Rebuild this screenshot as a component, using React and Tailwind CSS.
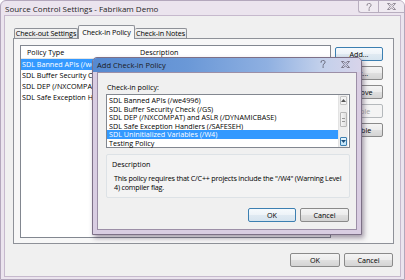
import React from "react";

function Btn({ children, className = "", def = false, disabled = false }) {
  const base =
    "h-[14px] flex items-center justify-center rounded-[2px] border whitespace-nowrap overflow-hidden";
  const look = def
    ? "border-[#3c7fb1] bg-[linear-gradient(#f6fafd,#edf3f8_50%,#e0eaf2_50%,#d6e4ef)] text-black"
    : disabled
    ? "border-[#b5b9bc] bg-[#f4f4f4] text-[#a3a3a3]"
    : "border-[#8a8a8a] bg-[linear-gradient(#f4f4f4,#ececec_50%,#e0e0e0_50%,#d4d4d4)] text-black";
  return <div className={`${base} ${look} ${className}`}>{children}</div>;
}

function CloseGlyph({ color = "#7b7480" }) {
  return (
    <svg width="9" height="7" viewBox="0 0 9 7">
      <path
        d="M0.5 0.5h2.3l1.7 1.8 1.7-1.8h2.3l-2.8 3 2.8 3h-2.3l-1.7-1.8-1.7 1.8h-2.3l2.8-3z"
        fill="none"
        stroke={color}
        strokeWidth="0.8"
      />
    </svg>
  );
}

function HelpGlyph({ color = "#7b7480" }) {
  return (
    <svg width="6" height="8" viewBox="0 0 6 8">
      <path
        d="M1 2.3a2 2 0 1 1 3 1.6c-0.6 0.4-0.9 0.7-0.9 1.4M3.1 6.6v0.9"
        fill="none"
        stroke={color}
        strokeWidth="0.9"
        strokeLinecap="round"
      />
    </svg>
  );
}

export default function App() {
  const outerRows = [
    "SDL Banned APIs (/we4996)",
    "SDL Buffer Security Check (/GS)",
    "SDL DEP (/NXCOMPAT) and ASLR (/DYNAMICBASE)",
    "SDL Safe Exception Handlers (/SAFESEH)",
  ];
  const innerRows = [
    "SDL Banned APIs (/we4996)",
    "SDL Buffer Security Check (/GS)",
    "SDL DEP (/NXCOMPAT) and ASLR (/DYNAMICBASE)",
    "SDL Safe Exception Handlers (/SAFESEH)",
    "SDL Uninitialized Variables (/W4)",
    "Testing Policy",
  ];
  return (
    <div className="w-[405px] h-[280px] relative overflow-hidden bg-[#ebe4ee] border border-[#b3a7bc] rounded-t-[6px] flex flex-col font-['Open_Sans',sans-serif] text-[7.2px] leading-[9px] text-black">
      {/* outer title bar */}
      <div className="h-[14px] flex items-start shrink-0">
        <span className="pl-[4px] pt-[3px] text-[8px] text-[#1e1e1e] whitespace-nowrap">
          Source Control Settings - Fabrikam Demo
        </span>
        <div className="ml-auto flex h-[12px] border-l border-b border-[#b8aebf] rounded-bl-[3px] bg-[#efeaf1]">
          <div className="w-[20px] flex items-center justify-center border-r border-[#b8aebf]">
            <HelpGlyph />
          </div>
          <div className="w-[25px] flex items-center justify-center">
            <CloseGlyph />
          </div>
        </div>
      </div>

      {/* outer client */}
      <div className="mx-[3px] mb-[2px] flex-1 border border-[#c6b9cd] bg-[#f0f0f0] flex flex-col pl-[8px] pr-[6px]">
        {/* tabs */}
        <div className="h-[22px] flex items-end shrink-0 pl-[1px] tracking-[-0.1px]">
          <div className="w-[64px] h-[10px] border border-b-0 border-[#8e9198] rounded-t-[2px] bg-[linear-gradient(#f4f4f4,#e4e4e4)] flex items-center justify-center whitespace-nowrap">
            Check-out Settings
          </div>
          <div className="w-[57px] h-[14px] -mb-px z-10 border border-b-0 border-[#8e9198] rounded-t-[2px] bg-[#f7f7f7] flex items-center justify-center whitespace-nowrap">
            Check-in Policy
          </div>
          <div className="w-[52px] h-[10px] border border-b-0 border-l-0 border-[#8e9198] rounded-t-[2px] bg-[linear-gradient(#f4f4f4,#e4e4e4)] flex items-center justify-center whitespace-nowrap">
            Check-in Notes
          </div>
        </div>

        {/* tab panel */}
        <div className="h-[206px] shrink-0 border border-[#8e9198] bg-[#f7f7f7] flex pl-[6px] pt-[6px] pr-[9px]">
          <div className="w-[311px] h-[193px] border border-[#828790] bg-white flex flex-col">
            <div className="h-[13px] flex items-center border-b border-[#e5e5e5] shrink-0">
              <span className="w-[113px] pl-[6px]">Policy Type</span>
              <span className="pl-[6px]">Description</span>
            </div>
            {outerRows.map((r, i) => (
              <div key={r} className="h-[11px] flex items-center">
                <span
                  className={
                    i === 0
                      ? "h-[11px] w-[113px] flex items-center pl-[1px] bg-[#3399ff] text-white whitespace-nowrap"
                      : "h-[11px] w-[113px] flex items-center pl-[1px] whitespace-nowrap"
                  }
                >
                  {r}
                </span>
              </div>
            ))}
          </div>
          <div className="ml-[4px] flex flex-col gap-[5px] pt-[2px]">
            <Btn def className="w-[48px]">Add...</Btn>
            <Btn className="w-[48px]">Edit...</Btn>
            <Btn className="w-[48px]">Remove</Btn>
            <Btn disabled className="w-[48px]">Enable</Btn>
            <Btn className="w-[48px]">Disable</Btn>
          </div>
        </div>

        {/* bottom buttons */}
        <div className="mt-[9px] flex justify-end gap-[4px] pr-[1px]">
          <Btn className="w-[50px]">OK</Btn>
          <Btn className="w-[49px]">Cancel</Btn>
        </div>
      </div>

      {/* Add Check-in Policy dialog (window over content) */}
      <div className="absolute left-[91px] top-[56px] w-[270px] h-[178px] rounded-t-[5px] border border-[#7d7087] bg-[#d9cde2] shadow-[2px_3px_5px_rgba(60,40,70,0.45)] flex flex-col">
        <div className="h-[14px] shrink-0 rounded-t-[4px] bg-[linear-gradient(90deg,#5689d0,#6a98d7_35%,#8fb0e1_65%,#c2d0eb_85%,#d8d4ea)] flex items-center">
          <span className="pl-[4px] text-[7.6px] text-[#1a1a1a]">Add Check-in Policy</span>
          <div className="ml-auto flex h-[12px] self-start pr-[4px]">
            <div className="w-[20px] flex items-center justify-center">
              <HelpGlyph color="#5a5a6a" />
            </div>
            <div className="w-[24px] flex items-center justify-center">
              <CloseGlyph color="#6a6474" />
            </div>
          </div>
        </div>
        <div className="mx-[4px] mb-[4px] flex-1 border border-[#9c8fa7] bg-[#f0f0f0] flex flex-col pl-[8px] pt-[10px]">
          <div className="h-[9px] pl-[1px]">Check-in policy:</div>
          <div className="mt-[2px] w-[244px] h-[54px] border border-[#828790] bg-white flex">
            <div className="flex-1 flex flex-col pt-[1px]">
              {innerRows.map((r, i) => (
                <div
                  key={r}
                  className={
                    i === 4
                      ? "h-[8.5px] leading-[8.5px] pl-[2px] bg-[#3399ff] text-white whitespace-nowrap"
                      : "h-[8.5px] leading-[8.5px] pl-[2px] whitespace-nowrap"
                  }
                >
                  {r}
                </div>
              ))}
            </div>
            <div className="w-[10px] mr-[1px] flex flex-col bg-[#eeeeee] border-l border-[#e3e3e3]">
              <div className="h-[9px] m-[1px] rounded-[1px] border border-[#c5c5c5] bg-[#f3f3f3] flex items-center justify-center">
                <svg width="5" height="3" viewBox="0 0 5 3">
                  <path d="M0 3L2.5 0L5 3z" fill="#555" />
                </svg>
              </div>
              <div className="h-[6px]" />
              <div className="h-[15px] mx-[1px] rounded-[1px] border border-[#b8b8b8] bg-[linear-gradient(90deg,#f5f5f5,#e0e0e0)] flex items-center justify-center">
                <div className="w-[3px] h-[4px] border-y border-[#999]" />
              </div>
              <div className="flex-1" />
              <div className="h-[9px] m-[1px] rounded-[1px] border border-[#3c7fb1] bg-[linear-gradient(#e4f3fc,#bfe3f9)] flex items-center justify-center">
                <svg width="5" height="3" viewBox="0 0 5 3">
                  <path d="M0 0L2.5 3L5 0z" fill="#1c4f7c" />
                </svg>
              </div>
            </div>
          </div>
          <div className="mt-[6px] w-[244px] h-[44px] border border-[#dde2e6] rounded-[2px] bg-[#f3f3f3] flex flex-col pt-[5px]">
            <div className="pl-[5px] h-[9px]">Description</div>
            <div className="pl-[7px] pt-[5px] whitespace-nowrap tracking-[-0.2px]">
              This policy requires that C/C++ projects include the "/W4" (Warning Level
              <br />
              4) compiler flag.
            </div>
          </div>
          <div className="mt-[10px] flex justify-end gap-[4px] pr-[7px]">
            <Btn def className="w-[48px]">OK</Btn>
            <Btn className="w-[49px]">Cancel</Btn>
          </div>
        </div>
      </div>
    </div>
  );
}
